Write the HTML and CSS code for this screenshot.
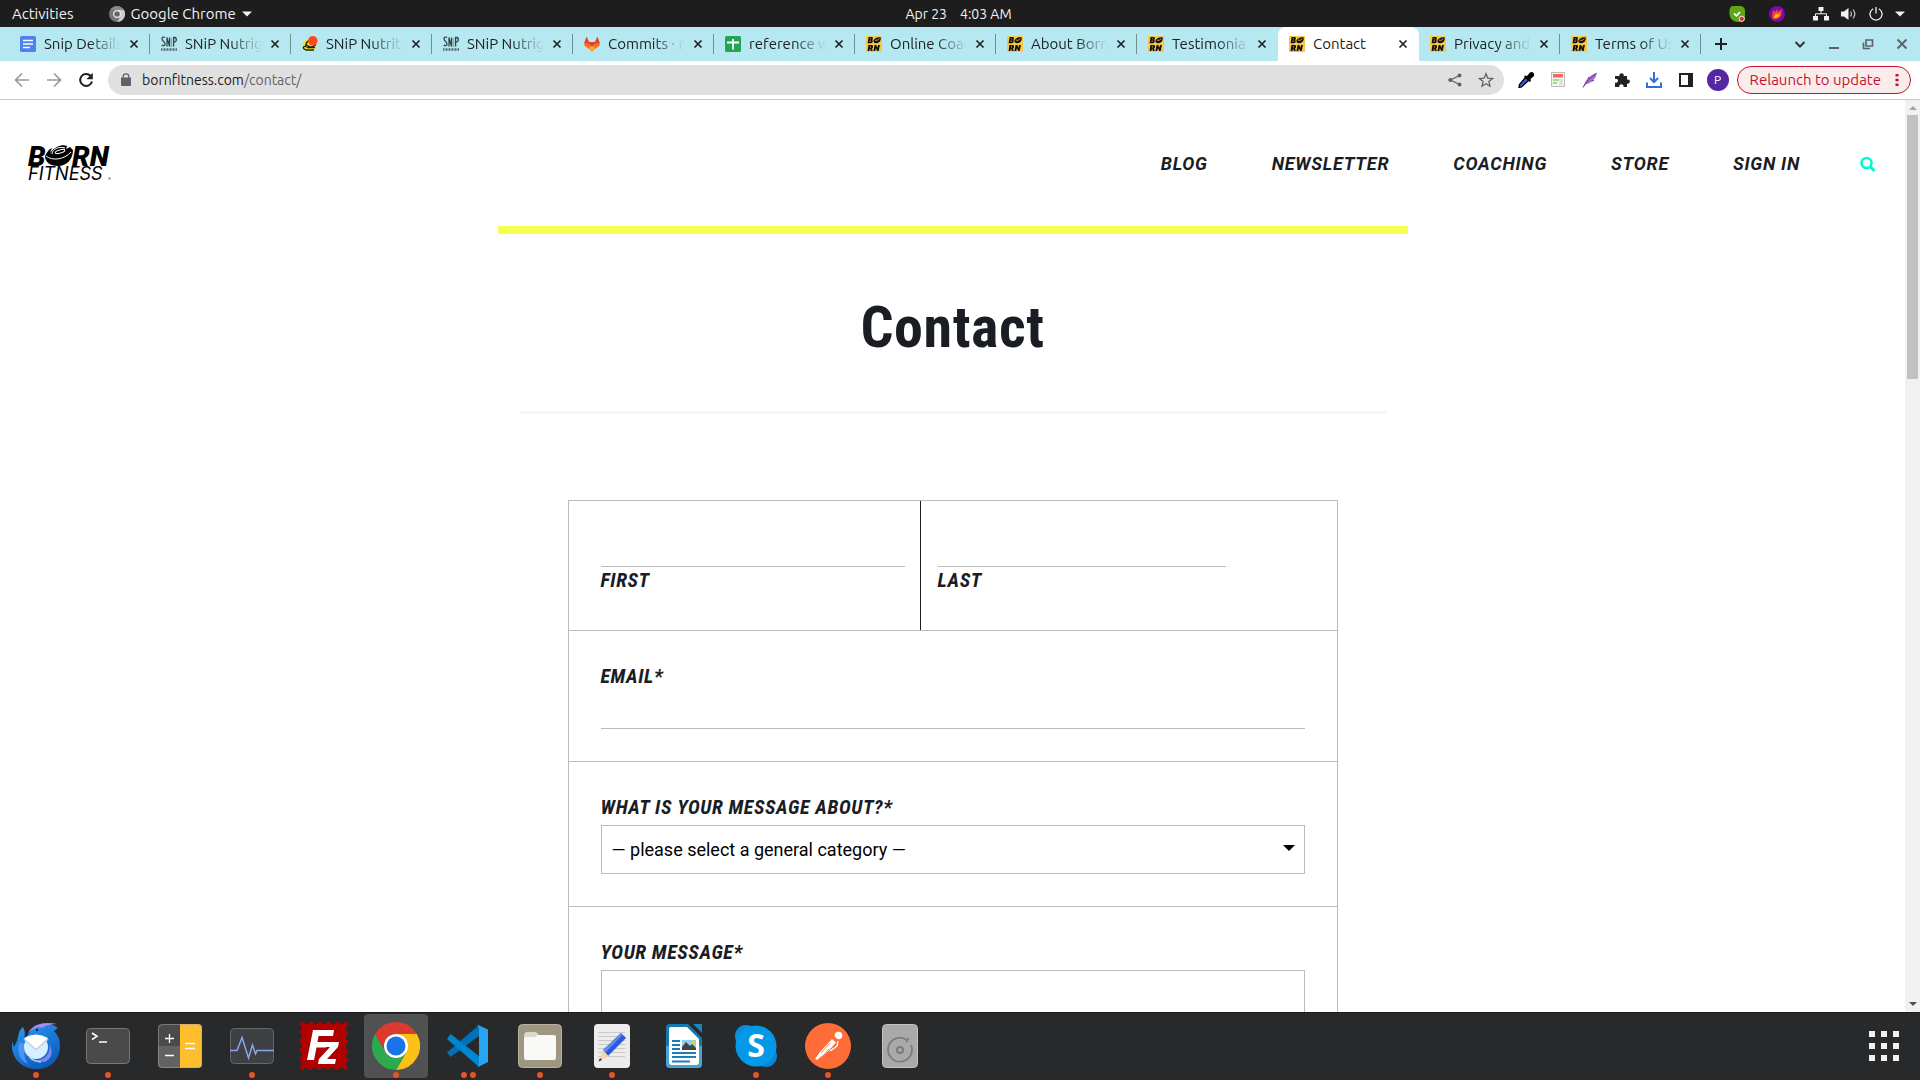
FILE: index.html
```html
<!DOCTYPE html>
<html lang="en">
<head>
<meta charset="utf-8">
<title>Contact</title>
<link rel="stylesheet" href="styles.css">
</head>
<body>
<svg class="defs" aria-hidden="true">
  <symbol id="x" viewBox="0 0 12 12"><path d="M2.500 2.500l7 7M9.500 2.500l-7 7" stroke="currentColor" stroke-width="1.700"/></symbol>
  <symbol id="born" viewBox="0 0 16 16">
    <rect width="16" height="16" fill="#f8c848"/>
    <path fill-rule="evenodd" fill="#111" d="M2.600 1h3c1.600 0 1.800 2.300.5 3 1.200.8.6 3.200-1.300 3.200H1.600zM4.200 2.300l-.2 1h.7l.2-1zM3.800 4.600l-.2 1.300h.8l.2-1.300z"/>
    <path fill="#111" d="M7.400 4.500C8 2.300 11 .8 14.600 1.200c.8 2.800-1 5.800-4.200 6-2 .1-3.200-1-3-2.700z"/><path d="M8.800 4c1.600.8 3.600.2 4.600-1.500" stroke="#f8c848" stroke-width=".8" fill="none"/>
    <path fill-rule="evenodd" fill="#111" d="M2.400 9h3.200c2 0 1.900 2.700.5 3.400l.6 2.600H4.800l-.5-2.300h-.4L3.500 15H1.600zM4.200 10.300l-.2 1.200h.8l.2-1.200z"/>
    <path fill="#111" d="M8.600 9h1.600l1.200 2.700L12 9h1.900l-1.200 6h-1.500L9.900 12.300 9.300 15H7.400z"/>
  </symbol>
  <symbol id="snip" viewBox="0 0 16 16">
    <path d="M4 1.600C3 .7 1 .9 1 2.800c0 2.600 3 2.700 3 5.200 0 2-2.300 2-3.200 1M6 10.500V1.500l2.600 9v-9M12.600 10.500v-9h1.200c2 0 2 4.400 0 4.400h-1.200" fill="none" stroke="#344" stroke-width="1.300"/>
    <path d="M10.500 2v9" stroke="#5cc7ae" stroke-width="1.300"/><path d="M10.500 6v1.500" stroke="#e88" stroke-width="1.300"/>
    <path d="M0 13.500h16" stroke="#567" stroke-width="2.400" stroke-dasharray="1 .5"/>
  </symbol>
</svg>

<header class="system">
  <div class="system-left">
    <button>Activities</button>
    <button class="app-menu">
      <svg width="16" height="16" viewBox="0 0 16 16"><circle cx="8" cy="8" r="8" fill="#777"/><path d="M8 4h7a8 8 0 0 1-6.500 12L12 9z" fill="#ccc"/><path d="M1.500 4A8 8 0 0 1 15 4H8z" fill="#8b8b8b"/><circle cx="8" cy="8" r="3.400" fill="#666" stroke="#eee" stroke-width="1.200"/></svg>
      Google Chrome
      <svg width="10" height="6" viewBox="0 0 10 6"><path d="M0 .5h10L5 5.500z" fill="#f2f2f2"/></svg>
    </button>
  </div>
  <time class="clock"><span>Apr 23</span><span>4:03 AM</span></time>
  <div class="tray">
    <svg width="16" height="16" viewBox="0 0 16 16"><path d="M4 0h8q4 1 4 5v5q0 6-6 6-7 0-9-5Q-1 0 4 0z" fill="#5fa514"/><path d="M5 7.500l2.500 2.300L11 6" stroke="#fff" stroke-width="1.700" fill="none"/><circle cx="12.800" cy="12.800" r="2.600" fill="#e22" stroke="#eee"/></svg>
    <svg class="flame" width="16" height="16" viewBox="0 0 16 16"><circle cx="8" cy="8" r="8" fill="#7d0aa8"/><path d="M4 13C2 10 4 7 4 4l2 2 2-3 1 3 4-3c-1 4 1 7-4 9.500-2 1-4 1.500-5 .5z" fill="#f2452e"/><path d="M5 12c0-3 2-3 2-5l1.500 2L11 7c0 3-2 5-6 5z" fill="#ffc021"/></svg>
    <svg width="16" height="14" viewBox="0 0 16 14"><path d="M5.500 0h5v4h-5zM0 9h5v4.500H0zM11 9h5v4.500h-5z" fill="#f2f2f2"/><path d="M8 4v3M2.500 9V6.800h11V9" stroke="#f2f2f2" fill="none"/></svg>
    <svg width="16" height="14" viewBox="0 0 16 14"><path d="M0 4.500h3L7.500 1v12L3 9.500H0z" fill="#f2f2f2"/><path d="M9.500 4.500q1.800 2.500 0 5M12 2.500q3.600 4.500 0 9" stroke="#ccc" stroke-width="1.200" fill="none"/></svg>
    <svg width="14" height="14" viewBox="0 0 14 14"><path d="M4.200 1.800a6 6 0 1 0 5.600 0M7 0v6.500" stroke="#f2f2f2" stroke-width="1.300" fill="none"/></svg>
    <svg width="10" height="6" viewBox="0 0 10 6"><path d="M0 .5h10L5 5.500z" fill="#f2f2f2"/></svg>
  </div>
</header>

<nav class="tabs" aria-label="Browser tabs">
  <div class="tab"><svg class="fav" viewBox="0 0 16 16"><rect width="16" height="16" rx="1.500" fill="#4c82ee"/><path d="M3 4.500h10M3 8h10M3 11.500h7" stroke="#fff" stroke-width="1.700"/></svg><a href="#">Snip Details</a><button aria-label="Close"><svg><use href="#x"/></svg></button></div>
  <div class="tab"><svg class="fav"><use href="#snip"/></svg><a href="#">SNiP Nutrig</a><button aria-label="Close"><svg><use href="#x"/></svg></button></div>
  <div class="tab"><svg class="fav" viewBox="0 0 16 16"><ellipse cx="7.500" cy="9" rx="7" ry="5.500" fill="#f2e21b"/><path d="M12 14H4c-5-2-2-4 0-3.500-1-5 4-7 6-5M4 8.500c3 3 7 3 10 0M5 11.500h8" fill="none" stroke="#222" stroke-width="1.300"/><circle cx="10.800" cy="4.800" r="4.800" fill="#ff4a1f"/></svg><a href="#">SNiP Nutrit</a><button aria-label="Close"><svg><use href="#x"/></svg></button></div>
  <div class="tab"><svg class="fav"><use href="#snip"/></svg><a href="#">SNiP Nutrig</a><button aria-label="Close"><svg><use href="#x"/></svg></button></div>
  <div class="tab"><svg class="fav" viewBox="0 0 16 16"><path d="M8 15.500L.5 9.500 0 7.500 2.500.8 5 6h6l2.500-5.200L16 7.500l-.5 2z" fill="#fc6d26"/><path d="M8 15.500L4.500 12 8 9.500l3.500 2.500z" fill="#fca326"/><path d="M2.500.8L5 6h6l2.500-5.200L15.500 7l-4.200.8L8 10.500 4.700 7.800.5 7z" fill="#e24329"/></svg><a href="#">Commits · n</a><button aria-label="Close"><svg><use href="#x"/></svg></button></div>
  <div class="tab"><svg class="fav" viewBox="0 0 16 16"><rect width="16" height="16" rx="1.500" fill="#23a455"/><path d="M2 6.500h12M8 3v10.500" stroke="#fff" stroke-width="1.800"/></svg><a href="#">reference w</a><button aria-label="Close"><svg><use href="#x"/></svg></button></div>
  <div class="tab"><svg class="fav"><use href="#born"/></svg><a href="#">Online Coac</a><button aria-label="Close"><svg><use href="#x"/></svg></button></div>
  <div class="tab"><svg class="fav"><use href="#born"/></svg><a href="#">About Born</a><button aria-label="Close"><svg><use href="#x"/></svg></button></div>
  <div class="tab no-line"><svg class="fav"><use href="#born"/></svg><a href="#">Testimonia</a><button aria-label="Close"><svg><use href="#x"/></svg></button></div>
  <div class="tab active"><svg class="fav"><use href="#born"/></svg><a href="#">Contact</a><button aria-label="Close"><svg><use href="#x"/></svg></button></div>
  <div class="tab"><svg class="fav"><use href="#born"/></svg><a href="#">Privacy and</a><button aria-label="Close"><svg><use href="#x"/></svg></button></div>
  <div class="tab"><svg class="fav"><use href="#born"/></svg><a href="#">Terms of Us</a><button aria-label="Close"><svg><use href="#x"/></svg></button></div>
  <button class="new-tab" aria-label="New tab"><svg width="12" height="12" viewBox="0 0 12 12"><path d="M6 0v12M0 6h12" stroke="#202124" stroke-width="2"/></svg></button>
  <div class="window-buttons">
    <button aria-label="Search tabs"><svg width="12" height="12" viewBox="0 0 12 12"><path d="M1.500 4L6 8.500 10.500 4" stroke="#333" stroke-width="2" fill="none"/></svg></button>
    <button aria-label="Minimize"><svg width="12" height="12" viewBox="0 0 12 12"><path d="M1 10h10" stroke="#5f6368" stroke-width="2"/></svg></button>
    <button aria-label="Restore"><svg width="12" height="12" viewBox="0 0 12 12"><path d="M4 2h6.500v6H4zM1.500 4.500v6H8" stroke="#5f6368" stroke-width="1.700" fill="none"/></svg></button>
    <button aria-label="Close window"><svg width="12" height="12" viewBox="0 0 12 12"><path d="M1.500 1.500l9 9M10.500 1.500l-9 9" stroke="#5f6368" stroke-width="2"/></svg></button>
  </div>
</nav>

<div class="toolbar">
  <div class="nav-buttons">
    <button aria-label="Back"><svg width="16" height="16" viewBox="0 0 16 16"><path d="M15 8H2M8 1.500L1.500 8 8 14.500" stroke="#9a9a9a" stroke-width="1.700" fill="none"/></svg></button>
    <button aria-label="Forward"><svg width="16" height="16" viewBox="0 0 16 16"><path d="M1 8h13M8 1.500L14.500 8 8 14.500" stroke="#9a9a9a" stroke-width="1.700" fill="none"/></svg></button>
    <button aria-label="Reload"><svg width="16" height="16" viewBox="0 0 16 16"><path d="M12.500 3.800A6 6 0 1 0 14 9.500" stroke="#202124" stroke-width="2.100" fill="none"/><path d="M14.800.8v6.400H8.400z" fill="#202124"/></svg></button>
  </div>
  <div class="omnibox">
    <svg width="10" height="13" viewBox="0 0 10 13"><path d="M0 4.500h10V12q0 1-1 1H1q-1 0-1-1z" fill="#5f6368"/><path d="M2.200 5V3.300a2.800 2.500 0 0 1 5.600 0V5" stroke="#5f6368" stroke-width="1.300" fill="none"/></svg>
    <a class="url" href="#">bornfitness.com<span>/contact/</span></a>
    <button aria-label="Share"><svg width="14" height="14" viewBox="0 0 14 14"><path d="M11.500 2.500L2.500 7l9 4.500" stroke="#5f6368" stroke-width="1.300" fill="none"/><circle cx="11.500" cy="2.500" r="2" fill="#5f6368"/><circle cx="2.300" cy="7" r="2" fill="#5f6368"/><circle cx="11.500" cy="11.500" r="2" fill="#5f6368"/></svg></button>
    <button aria-label="Bookmark"><svg width="16" height="16" viewBox="0 0 16 16"><path d="M8 1.800l1.800 4.400 4.700.4-3.600 3 1.100 4.600L8 11.700l-4 2.500 1.100-4.600-3.600-3 4.700-.4z" stroke="#5f6368" stroke-width="1.300" fill="none"/></svg></button>
  </div>
  <div class="extensions">
    <button aria-label="Color picker"><svg width="16" height="16" viewBox="0 0 16 16"><path d="M1 15.500l.5-3L8 5l3 3-7.500 7z" fill="#4457c8" stroke="#000" stroke-width="1.300"/><path d="M7 3.500l2 .5 3-3.500q2-1 3.500.5t.5 3L12.500 7l.5 2-1.500 1L6 5z" fill="#000"/></svg></button>
    <button aria-label="Notes"><svg width="14" height="15" viewBox="0 0 14 15"><path d="M.5.500h13v14H.5z" fill="#f4f4f4" stroke="#bbb"/><path d="M2 2h10v3.500H2z" fill="#f56a5a"/><path d="M2 8h6M2 11h4" stroke="#8fd460" stroke-width="1.500"/><path d="M10 7v6" stroke="#ddd" stroke-width="3"/></svg></button>
    <button aria-label="Feather"><svg width="16" height="16" viewBox="0 0 16 16"><path d="M1 15.500C3 9 6 4 15 .5c-1 6-5 10-11.500 12z" fill="#a86cc9"/><path d="M1 15.500C4 10 8 6 14 1.500M6 7l1-2M9.500 9l2.500-.5" stroke="#6b3a93" fill="none"/></svg></button>
    <button aria-label="Extensions"><svg width="16" height="16" viewBox="0 0 16 16"><path d="M1 4h4.500a2.200 2.200 0 1 1 4.200 0H13v3.500a2.200 2.200 0 1 1 0 4.200V15H9.500a2.200 2.200 0 1 0-4.200 0H1v-4.500a2 2 0 1 0 0-3.500z" fill="#202124"/></svg></button>
    <button aria-label="Downloads"><svg width="16" height="16" viewBox="0 0 16 16"><path d="M8 0v9.500M4 6l4 4 4-4M1 10.500V15h14v-4.500" stroke="#2f6fe4" stroke-width="2" fill="none"/></svg></button>
    <button aria-label="Side panel"><svg width="14" height="14" viewBox="0 0 14 14"><path d="M1 1h12v12H1z" fill="none" stroke="#202124" stroke-width="2"/><path d="M9 1h4v12H9z" fill="#202124"/></svg></button>
    <button class="avatar" aria-label="Profile">P</button>
  </div>
  <button class="relaunch">Relaunch to update
    <svg width="4" height="12" viewBox="0 0 4 12"><path d="M.5 0h3v2.600h-3zM.5 4.700h3v2.600h-3zM.5 9.400h3V12h-3z" fill="#c5122b"/></svg>
  </button>
</div>

<div class="viewport">
  <div class="page">
    <header class="site-header">
      <a class="logo" href="#" aria-label="Born Fitness">
        <svg width="86" height="38" viewBox="0 0 86 38">
          <text class="logo-b" x="1" y="22">B</text>
          <text class="logo-b" x="45" y="22">RN</text>
          <path d="M18 12C20 8 22 5 25 4l-2 5C28 2 36 0 40 2l-1 3 4-2 3 3c0 9-6 16-15 16-8 0-13-4-13-10z" fill="#000"/>
          <path d="M19 12c6 5 18 4 25-4M25 10c0-5 8-8 13-6" stroke="#fff" stroke-width="1" fill="none"/>
          <ellipse cx="33" cy="7.500" rx="5" ry="1.600" transform="rotate(-16 33 7.500)" fill="none" stroke="#fff" stroke-width="1"/>
          <text class="logo-f" x="1" y="36">FITNESS</text>
          <circle cx="82.500" cy="34.500" r="1.300" fill="#999"/>
        </svg>
      </a>
      <nav class="site-nav">
        <a href="#">Blog</a><a href="#">Newsletter</a><a href="#">Coaching</a><a href="#">Store</a><a href="#">Sign in</a>
      </nav>
      <button class="search" aria-label="Search"><svg width="16" height="18" viewBox="0 0 16 18"><circle cx="6.500" cy="9" r="5" fill="none" stroke="#08f7d0" stroke-width="2.600"/><path d="M10 12.500l4.500 4.500" stroke="#08f7d0" stroke-width="3"/></svg></button>
    </header>
    <main>
      <div class="accent"></div>
      <h1>Contact</h1>
      <hr>
      <form>
        <div class="row names">
          <div class="cell"><input id="first" type="text"><label for="first">First</label></div>
          <div class="cell"><input id="last" type="text"><label for="last">Last</label></div>
        </div>
        <div class="row"><label for="email">Email*</label><input id="email" type="email"></div>
        <div class="row"><label for="topic">What is your message about?*</label>
          <div class="select"><select id="topic"><option>— please select a general category —</option></select></div>
        </div>
        <div class="row"><label for="message">Your message*</label><textarea id="message"></textarea></div>
      </form>
    </main>
  </div>
  <div class="scrollbar" aria-hidden="true">
    <svg width="8" height="4" viewBox="0 0 8 4"><path d="M0 4h8L4 0z" fill="#a3a3a3"/></svg>
    <div class="thumb"></div>
    <svg width="8" height="4" viewBox="0 0 8 4"><path d="M0 0h8L4 4z" fill="#505050"/></svg>
  </div>
</div>

<footer class="dock">
  <button class="app run" aria-label="Thunderbird"><svg viewBox="0 0 48 48"><defs><linearGradient id="tb" x1="0" y1="0" x2=".6" y2="1"><stop offset="0" stop-color="#2f9df4"/><stop offset="1" stop-color="#0c5cc0"/></linearGradient></defs><path d="M0 19C-2 36 10 47 25 47c14 0 23-10 23-23 0-8-3-12-6-15l4-3c-6-5-21-8-27 3-3 5-7 6-8 10 3-6 2-10 0-14C6 9 7 13 5 19l-3 6z" fill="url(#tb)"/><path d="M16 12C19 3 31-1 45 2c-6 0-11 1-15 4-4-2-9 0-14 6z" fill="#a78bf0"/><path d="M8 20c-4 8-1 18 8 22-4-6-5-13-2-20z" fill="#4f94f0"/><path d="M37 23c2 9-4 14-13 16l8 1c8-3 10-11 5-17z" fill="#7b8bea"/><circle cx="24" cy="25" r="12" fill="#d6efff"/><path d="M12 16q12-7 24 0L26 26q-2 2-4 0z" fill="#fff"/><path d="M12 17l10 9q2 2 4 0l10-9M17 34c2 4 6 5 12 6" stroke="#bcd4ea" stroke-width="1.500" fill="none"/><circle cx="25" cy="8" r="1.200" fill="#123"/></svg></button>
  <button class="app run" aria-label="Terminal"><svg viewBox="0 0 48 48"><rect x="2.500" y="6.500" width="43" height="35" rx="4" fill="#4a4a4a" stroke="#777"/><path d="M8 11l5 3.300L8 17.500M15 20h8" stroke="#fff" stroke-width="1.600" fill="none"/></svg></button>
  <button class="app" aria-label="Calculator"><svg viewBox="0 0 48 48"><path d="M24 2v22H2V6q0-4 4-4z" fill="#4a4a4a"/><path d="M24 24v22H6q-4 0-4-4V24z" fill="#626262"/><path d="M24 2h18q4 0 4 4v36q0 4-4 4H24z" fill="#fdbd2c"/><rect x="2.500" y="2.500" width="43" height="43" rx="4" fill="none" stroke="#aaa" opacity=".5"/><path d="M9 16.500h9M13.500 12v9M9 33.500h9M29 21.500h10M29 26.500h10" stroke="#fff" stroke-width="1.300"/></svg></button>
  <button class="app run" aria-label="System Monitor"><svg viewBox="0 0 48 48"><rect x="2.500" y="6.500" width="43" height="35" rx="4" fill="#3f4044" stroke="#66676a"/><path d="M2 28.500h7l5-13 6.500 20.500 4-13 3 9 1.500-3.500h17" stroke="#8ba5ec" stroke-width="1.500" fill="none"/></svg></button>
  <button class="app" aria-label="FileZilla"><svg viewBox="0 0 48 48"><rect x="2" y="2" width="44" height="44" fill="#b10000"/><rect x="2" y="2" width="44" height="44" fill="none" stroke="#b10000" stroke-width="4" stroke-linecap="round" stroke-dasharray="1 7.800"/><path d="M13 8h21l-1 6H18.500l-1 6H27l-1 5.500h-9.500L14 38H7z" fill="#fff"/><path d="M24 20h15l-1 5-11 12h9l-1 5H18l1-5 11-12h-7z" fill="#fff"/></svg></button>
  <button class="app run current" aria-label="Google Chrome"><svg viewBox="0 0 48 48"><path d="M24 12h20.800A24 24 0 0 1 24 48l10.400-18z" fill="#fbc116"/><path d="M3.200 12A24 24 0 0 0 24 48l10.400-18a12 12 0 0 1-20.800 0z" fill="#2da94f"/><path d="M3.200 12a24 24 0 0 1 41.600 0H24a12 12 0 0 0-10.400 18z" fill="#db3a2e"/><circle cx="24" cy="24" r="12" fill="#fff"/><circle cx="24" cy="24" r="9.500" fill="#1a73e8"/></svg></button>
  <button class="app run two" aria-label="Visual Studio Code"><svg viewBox="0 0 48 48"><path d="M35 3L3 30.500l3.500 4.500L35 14z" fill="#0070b8"/><path d="M35 45L3 17l3.500-5L35 34z" fill="#0086d1"/><path d="M33 2.500l11 5V40l-11 5.500q2-1 2-4V7q0-3-2-4.500z" fill="#27a5f2"/></svg></button>
  <button class="app run" aria-label="Files"><svg viewBox="0 0 48 48"><rect x="2.500" y="2.500" width="43" height="43" rx="4" fill="#9f9681" stroke="#b9b19f"/><path d="M8 14q0-4 3-4h9l3 3h-2v7H8z" fill="#ddd8ca"/><path d="M8 17q0-2 2-2h9l3-2h16q2 0 2 2v20q0 3-2 3H10q-2 0-2-3z" fill="#f8f8f7"/></svg></button>
  <button class="app run" aria-label="Text Editor"><svg viewBox="0 0 48 48"><rect x="6" y="2" width="36" height="44" rx="4" fill="#ececec"/><path d="M10 10.500h27M10 14.500h27M10 18.500h27M10 22.500h27M10 26.500h27M10 30.500h27M10 34.500h27" stroke="#c9c9c9"/><path d="M33 11l5 5-18 18-5-6z" fill="#2b5bd7"/><path d="M33 11l1.500 2L17 31l-2-3z" fill="#5f8af0"/><path d="M15 28l5.500 6.500L11 39z" fill="#f5d3ae"/><path d="M12 36l2 2-3.500 1.500z" fill="#333"/></svg></button>
  <button class="app" aria-label="LibreOffice Writer"><svg viewBox="0 0 48 48"><path d="M10 2h18l14 14v26q0 4-4 4H10q-4 0-4-4V6q0-4 4-4z" fill="#1679ae"/><path d="M6 24h36v18q0 4-4 4H10q-4 0-4-4z" fill="#45a5d5"/><path d="M33 2h9v9z" fill="#1987bd"/><path d="M11 5h16l12 12v23q0 3-3 3H12q-3 0-3-3V7q0-2 2-2z" fill="#fff"/><path d="M12 19h8M12 23h8M12 27h8M12 31h24M12 35h24M12 39.500h18" stroke="#1c7fb5" stroke-width="2"/><path d="M22 18h14v10H22z" fill="#8ed0ef"/><path d="M22 28v-3l4-5 4 4 2-2 4 4v2z" fill="#444"/><circle cx="33.500" cy="20.500" r="2" fill="#f7c52c"/></svg></button>
  <button class="app run" aria-label="Skype"><svg viewBox="0 0 48 48"><circle cx="14" cy="14" r="11" fill="#0a8fe0"/><circle cx="34" cy="34" r="11" fill="#0a84d8"/><circle cx="24" cy="24" r="20.500" fill="#0399e6"/><text class="skype-s" x="24" y="35">S</text></svg></button>
  <button class="app run" aria-label="Postman"><svg viewBox="0 0 48 48"><circle cx="24" cy="24" r="23" fill="#ff6c37"/><circle cx="34.500" cy="13.500" r="3.800" fill="#fff"/><path d="M28 17l4 3.500-8 9-8 6-3 2.500-2-1 5-7z" fill="#fff"/><path d="M31 15l4 4-8 9M17 31l9-10M20 33l5-6" stroke="#ff6c37" stroke-width=".8" fill="none"/><path d="M34 19l-1 5-7 5" stroke="#fff" stroke-width="1.300" fill="none"/></svg></button>
  <button class="app" aria-label="Disks"><svg viewBox="0 0 48 48"><rect x="6.500" y="2.500" width="35" height="43" rx="4" fill="#a9a9a9" stroke="#c4c4c4"/><path d="M31 18a12 12 0 1 0 4 5M33 16l-3 4" stroke="#7b7b7b" stroke-width="1.700" fill="none"/><circle cx="24" cy="28" r="3" fill="none" stroke="#7b7b7b" stroke-width="2"/></svg></button>
  <button class="app launcher" aria-label="Show applications"><svg viewBox="0 0 48 48"><path d="M9 12h30M9 24h30M9 36h30" stroke="#f0f0f0" stroke-width="6" stroke-dasharray="6 6"/></svg></button>
</footer>
</body>
</html>
```
FILE: styles.css
```css
* { box-sizing: border-box; }

body {
  margin: 0;
  height: 100vh;
  display: flex;
  flex-direction: column;
  overflow: hidden;
  background: #fff;
  color: #1b1d25;
  font-family: Ubuntu, "Noto Sans", sans-serif;
  font-size: 15px;
}

button {
  display: flex;
  align-items: center;
  justify-content: center;
  padding: 0;
  border: 0;
  background: none;
  color: inherit;
  font: inherit;
}

a { color: inherit; text-decoration: none; }
svg { flex: none; }
.defs { display: none; }

/* System bar */
.system {
  flex: none;
  display: grid;
  grid-template-columns: 1fr auto 1fr;
  align-items: center;
  height: 27px;
  padding: 0 15px 0 12px;
  background: #1d1d1d;
  color: #f2f2f2;
}
.system-left { display: flex; gap: 35px; }
.app-menu { gap: 6px; }
.clock { display: flex; gap: 13px; font-size: 14px; }
.tray { display: flex; align-items: center; justify-content: flex-end; gap: 12px; }
.tray .flame { margin: 0 16px 0 12px; }

/* Browser tabs */
.tabs {
  flex: none;
  display: flex;
  height: 34px;
  padding-left: 9px;
  background: #b6e8f1;
  color: #202124;
}
.tab {
  flex: 0 1 141px;
  min-width: 0;
  display: flex;
  align-items: center;
  padding: 0 8px 0 11px;
  background: linear-gradient(#6f8f96, #6f8f96) right center / 1px 20px no-repeat;
}
.tab.no-line { background: none; }
.tab.active { background: #fff; border-radius: 8px 8px 0 0; }
.tab a {
  flex: 1;
  min-width: 0;
  margin-left: 8px;
  padding-bottom: 2px;
  overflow: hidden;
  white-space: nowrap;
  mask-image: linear-gradient(to left, transparent, #000 32px);
}
.tab.active a { mask-image: none; }
.fav { width: 16px; height: 16px; }
.tab button { width: 16px; height: 16px; margin-left: 5px; }
.tab button svg { width: 12px; height: 12px; }
.new-tab { width: 24px; margin-left: 8px; }
.window-buttons { display: flex; gap: 10px; margin-left: auto; padding-right: 6px; }
.window-buttons button { width: 24px; }

/* Toolbar */
.toolbar {
  flex: none;
  display: flex;
  align-items: center;
  height: 39px;
  padding: 0 9px 1px 14px;
  border-bottom: 1px solid #c8c8c8;
}
.nav-buttons { display: flex; gap: 16px; margin-right: 14px; }
.omnibox {
  flex: 1;
  display: flex;
  align-items: center;
  gap: 16px;
  height: 30px;
  padding: 0 10px 0 13px;
  border-radius: 15px;
  background: #e0e0e0;
}
.url { flex: 1; margin-left: -5px; color: #202124; font-size: 14px; }
.url span { color: #5f6368; }
.extensions { display: flex; align-items: center; padding: 0 3px 0 6px; }
.extensions button { width: 32px; height: 22px; }
.extensions .avatar {
  width: 22px;
  margin: 0 5px;
  border-radius: 50%;
  background: #5627a3;
  color: #fff;
  font-size: 12px;
}
.relaunch {
  gap: 14px;
  height: 28px;
  padding: 0 11px 0 12px;
  border: 1px solid #c5122b;
  border-radius: 14px;
  background: #faecec;
  color: #c5122b;
}

/* Page viewport */
.viewport { flex: 1; min-height: 0; display: flex; overflow: hidden; }
.page { flex: 1; overflow: hidden; }
.scrollbar {
  flex: none;
  display: flex;
  flex-direction: column;
  align-items: center;
  width: 15px;
  padding: 6px 0;
  background: #f1f1f1;
}
.thumb { width: 11px; height: 264px; margin: 5px 0 auto; background: #c1c1c1; }

.site-header {
  display: flex;
  align-items: center;
  height: 126px;
  padding: 0 29px 0 27px;
}
.logo { margin-right: auto; }
.logo svg { display: block; }
.logo-b { font: italic 900 28px Roboto, sans-serif; }
.logo-f { font: italic 400 18px Inter, sans-serif; }
.site-nav {
  display: flex;
  gap: 64px;
  font: italic 700 18px Roboto, sans-serif;
  letter-spacing: .04em;
  text-transform: uppercase;
}
.search { margin-left: 60px; }

main { display: flex; flex-direction: column; align-items: center; }
.accent { width: 100%; max-width: 910px; height: 8px; background: #f6ff4e; }
h1 {
  margin: 59px 0 49px;
  font: 700 58px/69px "Roboto Condensed", "Liberation Sans Narrow", sans-serif;
  letter-spacing: .01em;
}
hr { width: 100%; max-width: 866px; height: 3px; margin: 0; border: 0; background: #f4f7fa; }

/* Contact form */
form {
  width: 100%;
  max-width: 770px;
  margin-top: 86px;
  border: 1px solid #bbb;
}
.row { padding: 32px; border-bottom: 1px solid #bbb; }
.names { display: flex; padding: 0; }
.cell { padding: 31px 15px 37px 32px; width: 352px; border-right: 1px solid #1b1d25; }
.cell + .cell { flex: 1; padding: 31px 111px 37px 17px; border: 0; }
label {
  display: block;
  font: italic 700 20px/26px "Roboto Condensed", "Liberation Sans Narrow", sans-serif;
  letter-spacing: .03em;
  text-transform: uppercase;
}
input {
  display: block;
  width: 100%;
  height: 35px;
  border: 0;
  border-bottom: 1px solid #bbb;
  background: none;
  font: 18px Roboto, sans-serif;
}
label + input, label + .select, label + textarea { margin-top: 5px; }
.select { position: relative; }
.select::after {
  content: "";
  position: absolute;
  top: 20px;
  right: 10px;
  border: 6px solid transparent;
  border-top-color: #000;
  border-bottom: 0;
}
select {
  display: block;
  appearance: none;
  width: 100%;
  height: 49px;
  padding: 0 10px;
  border: 1px solid #bbb;
  border-radius: 0;
  background: #fff;
  color: #000;
  font: 18px Roboto, sans-serif;
}
textarea {
  display: block;
  width: 100%;
  height: 160px;
  border: 1px solid #bbb;
  resize: none;
}

/* Dock */
.dock {
  flex: none;
  display: flex;
  align-items: center;
  gap: 8px;
  height: 68px;
  padding: 0 4px 2px;
  border-top: 1px solid #1b1b1c;
  background: #28292b;
}
.app { position: relative; width: 64px; height: 64px; border-radius: 4px; }
.app svg { width: 48px; height: 48px; }
.app.current { background: #505153; }
.app.run::after {
  content: "";
  position: absolute;
  bottom: 0;
  left: 29px;
  width: 6px;
  height: 6px;
  border-radius: 50%;
  background: #e95420;
}
.app.two::after { left: 25px; box-shadow: 9px 0 #e95420; }
.launcher { margin-left: auto; }
.skype-s { font: 700 32px "Open Sans", sans-serif; fill: #fff; text-anchor: middle; }
```
